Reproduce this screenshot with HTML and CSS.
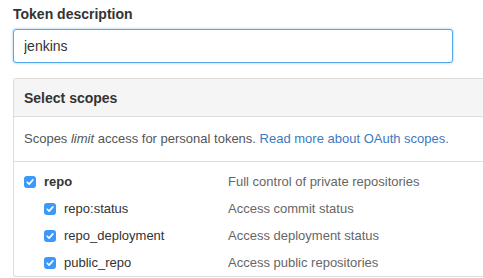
FILE: index.html
```html
<!DOCTYPE html>
<html lang="en">
<head>
    <meta charset="UTF-8">
    <title>New personal access token</title>
    <link rel="stylesheet" href="styles.css">
</head>
<body>
    <div class="form-group">
        <label class="field-label" for="description">Token description</label>
        <input class="token-input" id="description" type="text" value="jenkins">
    </div>
    <div class="scopes-box">
        <div class="scopes-header">
            <h3>Select scopes</h3>
        </div>
        <p class="scopes-note">Scopes <em>limit</em> access for personal tokens. <a href="#">Read more about OAuth scopes.</a></p>
        <ul class="scope-list">
            <li class="scope parent">
                <span class="scope-label">
                    <span class="check"><svg viewBox="0 0 12 12" width="12" height="12"><path d="M3.2 6.2l1.9 1.9 3.8-4.2" fill="none" stroke="#fff" stroke-width="1.6" stroke-linecap="round" stroke-linejoin="round"/></svg></span>
                    <span class="name">repo</span>
                </span>
                <span class="desc">Full control of private repositories</span>
            </li>
            <li class="scope child">
                <span class="scope-label">
                    <span class="check"><svg viewBox="0 0 12 12" width="12" height="12"><path d="M3.2 6.2l1.9 1.9 3.8-4.2" fill="none" stroke="#fff" stroke-width="1.6" stroke-linecap="round" stroke-linejoin="round"/></svg></span>
                    <span class="name">repo:status</span>
                </span>
                <span class="desc">Access commit status</span>
            </li>
            <li class="scope child">
                <span class="scope-label">
                    <span class="check"><svg viewBox="0 0 12 12" width="12" height="12"><path d="M3.2 6.2l1.9 1.9 3.8-4.2" fill="none" stroke="#fff" stroke-width="1.6" stroke-linecap="round" stroke-linejoin="round"/></svg></span>
                    <span class="name">repo_deployment</span>
                </span>
                <span class="desc">Access deployment status</span>
            </li>
            <li class="scope child">
                <span class="scope-label">
                    <span class="check"><svg viewBox="0 0 12 12" width="12" height="12"><path d="M3.2 6.2l1.9 1.9 3.8-4.2" fill="none" stroke="#fff" stroke-width="1.6" stroke-linecap="round" stroke-linejoin="round"/></svg></span>
                    <span class="name">public_repo</span>
                </span>
                <span class="desc">Access public repositories</span>
            </li>
        </ul>
    </div>
</body>
</html>
```

FILE: styles.css
```css
* {
    margin: 0;
    padding: 0;
    box-sizing: border-box;
}

html, body {
    overflow: hidden;
}

body {
    font-family: "Liberation Sans", Arial, sans-serif;
    font-size: 13px;
    color: #333;
    background-color: #fff;
    padding: 6px 0 0 13px;
}

.form-group {
    margin-bottom: 15px;
}

.field-label {
    display: block;
    font-size: 14px;
    font-weight: bold;
    line-height: 16px;
    margin-bottom: 7px;
}

.token-input {
    display: block;
    width: 440px;
    height: 34px;
    padding: 0 10px;
    font-family: inherit;
    font-size: 14px;
    color: #333;
    border: 1px solid #51a7e8;
    border-radius: 3px;
    box-shadow: 0 0 3px rgba(81, 167, 232, 0.6);
    outline: none;
}

.scopes-box {
    border: 1px solid #ddd;
    border-right: none;
    border-radius: 3px 0 0 3px;
}

.scopes-header {
    background-color: #f5f5f5;
    border-bottom: 1px solid #ddd;
    height: 38px;
    padding: 0 10px;
    display: flex;
    align-items: center;
}

.scopes-header h3 {
    font-size: 14px;
    font-weight: bold;
}

.scopes-note {
    padding: 14px 10px 14px;
    line-height: 16px;
    border-bottom: 1px solid #ddd;
    color: #555;
}

.scopes-note a {
    color: #4078c0;
    text-decoration: none;
}

.scope-list {
    list-style-type: none;
    padding: 6px 10px 0;
}

.scope {
    display: flex;
    align-items: center;
    height: 27px;
}

.scope-label {
    display: flex;
    align-items: center;
    width: 204px;
}

.child .scope-label {
    margin-left: 20px;
    width: 184px;
}

.check {
    width: 12px;
    height: 12px;
    border-radius: 3px;
    background-color: #3b99fc;
    display: flex;
    margin-right: 8px;
}

.name {
    color: #333;
}

.parent .name {
    font-weight: bold;
}

.desc {
    color: #666;
}
```
